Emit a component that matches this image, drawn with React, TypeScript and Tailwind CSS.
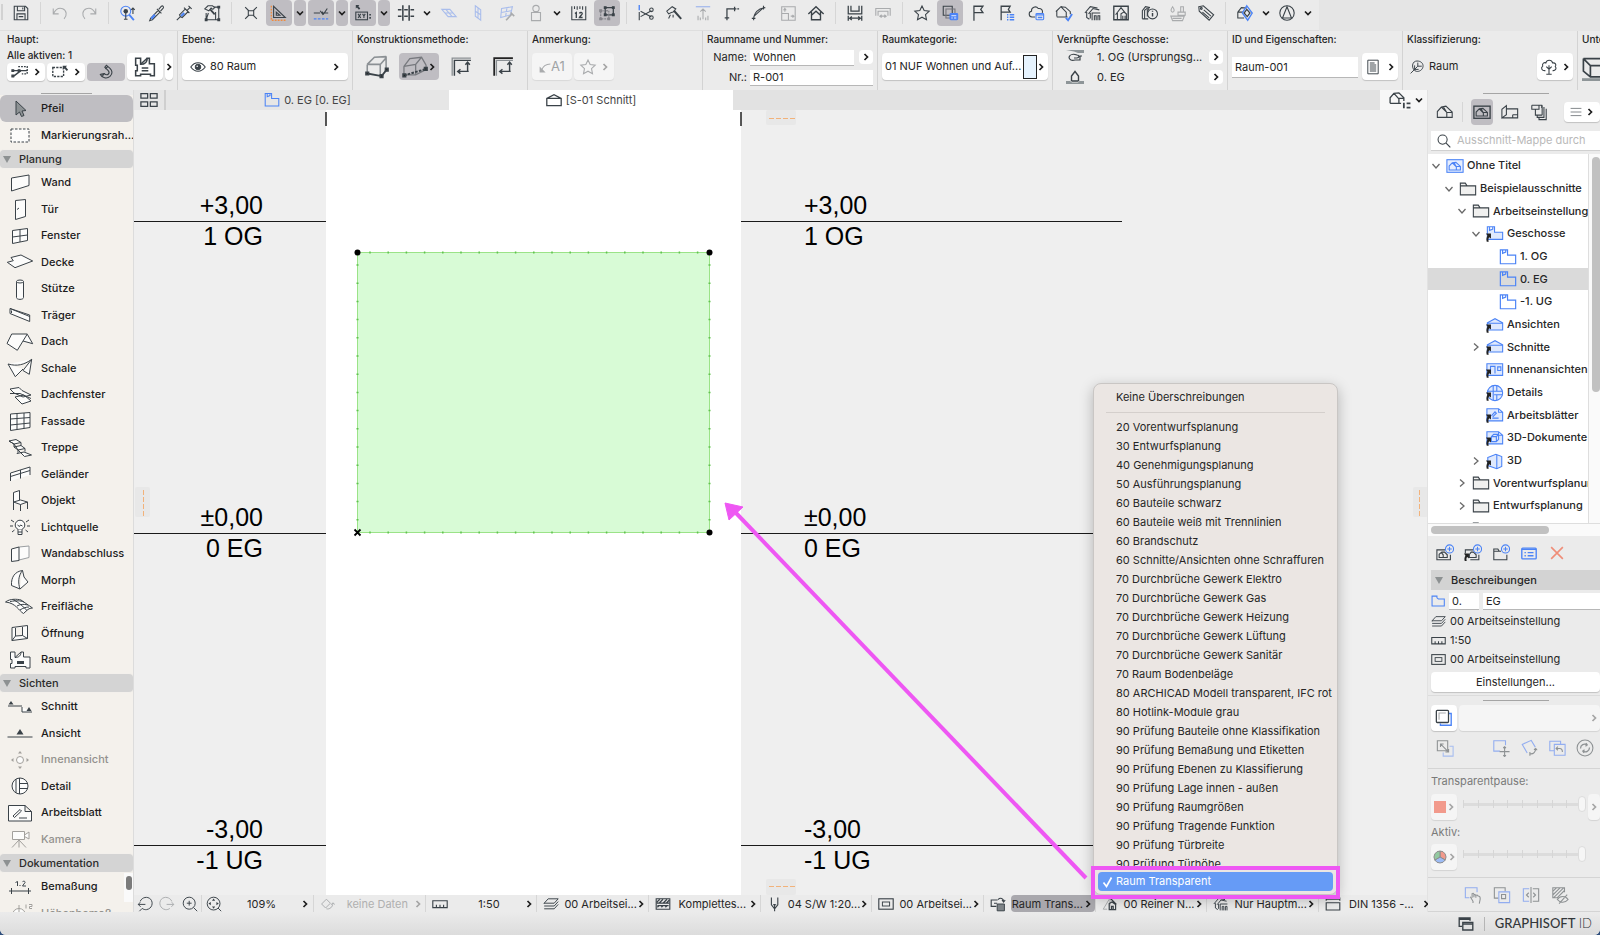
import type { ReactNode } from "react";

const INK = "#3a4248";
const BLUE = "#4b83f6";
const GREY = "#a9abad";

// 20x20 icons for toolbars and panels
const icons: Record<string, ReactNode> = {
  save: (
    <>
      <path d="M2.500 2.500h12.500l2.500 2.500v12.500h-15z" />
      <path d="M6 2.500v5h8v-5M12 4v2M5.500 17.500v-6.500h9v6.500M7.500 14h5" />
    </>
  ),
  undo: <path stroke={GREY} d="M2.500 5v6H8.500M2.700 10.800C5 6 9 3.800 13 5.200c4.500 1.800 5.200 7.500 1.500 11.300" />,
  redo: <path stroke={GREY} d="M17.500 5v6H11.500M17.300 10.800C15 6 11 3.800 7 5.200c-4.500 1.800-5.200 7.500-1.500 11.300" />,
  find: (
    <>
      <circle cx="7.500" cy="8" r="5.500" stroke={BLUE} />
      <path stroke={BLUE} d="M11.500 12l5 6" strokeWidth="2" />
      <circle cx="7.500" cy="8" r="2.500" fill={INK} stroke="none" />
      <path d="M7.500 8v9.500M15.500 11V4.500M13.500 6.500l2-2 2 2M5.500 17h4" />
    </>
  ),
  dropper: (
    <>
      <path d="M4 16l8.500-9 2 2L6 17.500l-3 1zM11 5.500l5 5M13 6l3-3.500c1.500-1 3 .5 2 2L15 8" />
      <path stroke={BLUE} strokeWidth="2.600" d="M4.800 16.200l4-4.200" />
    </>
  ),
  syringe: (
    <>
      <path d="M2 18l4-4M6 14l-1-2 6.500-6.500 3 3L8 15zM10 4l6 6M13.500 7L17 3.500M15 2l3.500 3.500" />
      <path stroke={BLUE} strokeWidth="2.400" d="M6.800 13.400l3.500-3.400" />
    </>
  ),
  hatchEdit: (
    <>
      <path d="M12 3.500h5.500v14H3.500V10M14 17.500V9M3.500 17.500L6 10" />
      <path d="M2 5.500L5.500 2h5l2.500 2-2 2-2-1.500-2.500 3z" />
      <path d="M8 6l5 5.500" strokeWidth="2" />
      <path fill={INK} d="M2.500 16.500h2v2h-2zM16.500 16.500h2v2h-2zM16.500 2.500h2v2h-2z" />
    </>
  ),
  nodeX: <path d="M3.500 3.500l4 4M16.500 3.500l-4 4M3.500 16.500l4-4M16.500 16.500l-4-4M7 7.500h6v5H7z" />,
  triangle: (
    <>
      <path d="M4 2.500V15h13zM7 9v3.500h4z" />
      <path stroke="#f08b3e" strokeDasharray="2 1.300" d="M1.500 2v16H18" strokeWidth="1.500" />
    </>
  ),
  guide: (
    <>
      <path d="M2 10h7M12 10h6M11 8.500l2 2.500 4-6M9 7.500L12.500 12" />
      <path stroke={BLUE} strokeDasharray="3 1.500" d="M2 16.500h16" strokeWidth="1.500" />
    </>
  ),
  xy: (
    <>
      <rect x="2" y="9" width="13" height="8.500" />
      <path d="M4.500 11l3 4.500M7.500 11l-3 4.500M9.500 11l1.500 2.200V15.500M12.500 11L11 13.200" />
      <path fill={INK} stroke="none" d="M2 1h4L4.800 2.500 7 5 5.500 6.300 3.300 4 2 5zM17 11h1.800v1.800H17zM17 14.500h1.800v1.800H17z" />
    </>
  ),
  grid: <path strokeWidth="1.700" d="M6.500 1.500v17M13.500 1.500v17M1 6.500h4M8 6.500h4M15 6.500h4M1 13.500h4M8 13.500h4M15 13.500h4" />,
  planeFlat: <path stroke="#a9bdec" d="M2 6h9l7 8H9zM5.500 10h9M6.500 6l7 8" />,
  planeUp: <path stroke="#a9bdec" d="M7 2l6 4.500V18l-6-4.500zM10 4.300v11.500M7 8l6 4" />,
  planeEdit: (
    <>
      <path stroke="#a9bdec" d="M4 5l12-2-2 9-11 3zM10 4l-1.500 9.500M3.500 9.500l11-2" />
      <path stroke={GREY} strokeWidth="1.800" d="M9 18l6-6.500M14 9.500l4 4" />
    </>
  ),
  weight: (
    <>
      <path stroke={GREY} d="M5 9.500h10V18.500H5zM8 9.500V8M12 9.500V8" />
      <circle cx="10" cy="5" r="3.500" stroke={GREY} />
    </>
  ),
  ruler12: (
    <>
      <path d="M2 2.500v4M5 2.500v3M8 2.500v4M11 2.500v3M14 2.500v4M17.500 2.500v4M2 2.500V17.500h15.500V2.500" />
      <path strokeWidth="1.500" d="M5.500 10.500l1.500-1v6M10.500 10.500c.5-1.500 3.500-1.500 3 .5-.3 1-2 2-3 4h3.500" />
    </>
  ),
  group: (
    <>
      <path d="M8 4h9v8H8z" strokeWidth="1.400" />
      <path stroke="#85858b" strokeDasharray="2 1" d="M3 7.500h9v9H3z" strokeWidth="1.400" />
      <path fill={INK} d="M7 3h2v2H7zM16 3h2v2h-2zM7 11h2v2H7zM16 11h2v2h-2z" />
      <path fill="#85858b" stroke="#85858b" d="M2 6.500h2v2H2zM2 15.500h2v2H2zM11 15.500h2v2h-2z" />
    </>
  ),
  scissors: (
    <>
      <path stroke={BLUE} d="M2.500 1v6" strokeWidth="1.500" />
      <path d="M2.500 9v9M4 8l12 6.500M4 14l12-6.500" />
      <circle cx="16" cy="6.500" r="2" />
      <circle cx="16" cy="15" r="2" />
    </>
  ),
  hammer: (
    <>
      <path d="M2 8L8 3l4 2.500-3 3.500-2 .5L4 11z" />
      <path strokeWidth="2.200" d="M10 7.500l8 9" />
      <path d="M6 12l-2 4M9 12v3" />
    </>
  ),
  adjust: (
    <>
      <path stroke="#a9bdec" strokeWidth="1.500" d="M2 3h16" />
      <path stroke={GREY} d="M10 17V6M7 8.500L10 5.500l3 3M4.500 13v5M7 15v3M13 15v3M15.500 13v5" />
    </>
  ),
  corner: <path strokeWidth="1.400" d="M5.500 18V5.500H16M3 15.500h5M14 3v5M17 5.500h2" />,
  curve: <path d="M4 18C4 10 9 4.500 17 4M2 16h4M15 2v4M4 14L15 4" />,
  stretch: <path stroke={GREY} d="M3 3h15v15H3zM3 10.500h7.500V18M6.500 8.500v-3M5 7l1.500-2L8 7M13 13.500h3.500M15 12l1.500 1.500L15 15" />,
  house: <path strokeWidth="1.500" d="M1.500 11L10 3l8.500 8M5 8.500V17.500h10V8.500M5 12.500l5-4.500 5 4.500" />,
  dimLow: <path strokeWidth="1.400" d="M2.500 2v9h15V2M5.500 2v6h9V2M2.500 13v5.500M17.500 13v5.500M4 15.800h12M6.500 13.800l-2.500 2 2.500 2M13.500 13.800l2.500 2-2.500 2" />,
  dimHigh: <path stroke={GREY} d="M2 13V5h16v8M4.500 13V8h11v5M6.500 13.500h7M8.500 12l-2 1.500 2 1.500M11.500 12l2 1.500-2 1.500" />,
  star: <path d="M10 2.200l2.400 5.100 5.600.7-4.100 3.800 1.100 5.600L10 14.700l-5 2.700 1.100-5.600L2 8l5.600-.7z" />,
  starGrey: <path stroke={GREY} d="M10 2.200l2.400 5.100 5.600.7-4.100 3.800 1.100 5.600L10 14.700l-5 2.700 1.100-5.600L2 8l5.600-.7z" />,
  layersBlue: (
    <>
      <path d="M2.500 2.500h10v10h-10z" />
      <path stroke="#77777c" d="M5.500 5.500h10v10h-10z" />
      <rect x="10" y="10.500" width="8.500" height="7" rx="1" fill={BLUE} stroke={BLUE} />
      <path stroke="#e8efff" d="M11.500 13h5.500M11.500 15.500h1.500M14.500 15.500h2.500" />
    </>
  ),
  flag: <path strokeWidth="1.400" d="M5.500 18.500V2.500h10L13 6l2.500 3.500h-10" />,
  flagList: (
    <>
      <path strokeWidth="1.400" d="M3.500 18V2.500h10L11.500 6l2 3h-10" />
      <path stroke={BLUE} strokeWidth="1.600" d="M10 12h1.500M13 12h5M10 14.800h1.500M13 14.800h5M10 17.600h1.500M13 17.600h5" />
    </>
  ),
  cloud: (
    <>
      <path d="M9 14.500H5.500c-4-.5-4-6-.5-6.500C4.500 3.500 10 1.500 12.500 5c3.500-.5 5.500 2 4.500 5" />
      <rect x="10" y="10.500" width="8.500" height="7" rx="1" stroke={BLUE} />
      <path stroke={BLUE} strokeWidth="1.500" d="M10 12h8.500M12 15h5" />
    </>
  ),
  houseCheck: (
    <>
      <path d="M2 14V7.500L6.500 3l5 .5 5.500 5v3M2 7.500L1 8.500M6.500 3l6 6v5.500H2M12 14.500h2" />
      <path stroke={BLUE} strokeWidth="2" d="M12 15.500l2.500 2.500L19 11" />
    </>
  ),
  houseTrain: <path d="M1 10L7 3l8 1.500M3 9v6l3 2M5 11l5-6 7 1.500M7 10v6M9 18v-8h9M11.500 18v-5h2v5M15.500 18v-5h2v5" />,
  houseFrame: (
    <>
      <path strokeWidth="1.500" d="M2 2.500h16v15H2z" />
      <path d="M4 12l6-8 6.500 8M6 10v7.500M10 17V11l3-2 3 2v6M12 13v4M14.500 13v4" />
    </>
  ),
  housesInfo: (
    <>
      <path d="M1.500 16.500v-9L5 3l5 1M4 17V7l4-3M1.500 16.500H8M7 14V7l2-2" />
      <circle cx="12.800" cy="11" r="5.500" />
      <path strokeWidth="1.600" d="M12.800 10v4M12.800 7.500v1" />
    </>
  ),
  paint: <path stroke={GREY} d="M4 3c-3 4-1.500 6 0 6s3-2 0-6zM10 9h8v3.500h-8zM13 9V3h3v6M2 13.500h15l-2 5H4zM4 16h10" />,
  tag: (
    <>
      <path d="M2 3l5-1 11.500 10-5 6L2.500 8zM7.500 6.500l8 7M6 9l7.500 6.500" />
      <circle cx="4.800" cy="5" r="1" />
    </>
  ),
  cubeBlue: (
    <>
      <path d="M2 9l4-5 6 .5M2 9v6.500h7M2 9h6" />
      <path stroke={BLUE} strokeWidth="1.500" d="M12 2l6 8-5 8-6-8z" />
      <path strokeWidth="1.400" d="M12 6l3.500 4-3 4L9 10z" />
    </>
  ),
  north: (
    <>
      <circle cx="10" cy="10" r="8" />
      <path d="M10 3L5 15.500h10z" />
    </>
  ),
  marqueeArrow: (
    <>
      <path strokeDasharray="2 1.200" d="M8 4h10v8h-6" strokeWidth="1.500" />
      <path strokeWidth="1.600" d="M2 8.500h16M3 14.500l8-6" />
      <path fill={INK} d="M1 7.500h2v2H1zM1 13.500h2v2H1zM8 7.500h2v2H8z" />
    </>
  ),
  marquee: (
    <>
      <path strokeDasharray="2.500 1.300" d="M2 5h12v10H2z" strokeWidth="1.500" />
      <path fill={INK} stroke="none" d="M13 3h5l-1.500 1.500 2.500 3-1.500 1.500-2.500-3L13 7.500z" />
    </>
  ),
  magnet: <path strokeWidth="1.400" d="M3 13c2 4.500 8 6 12 2.500 4-4 2.500-7.500 0-10L10.500 1.500 8.500 4l4 4c2 2 1.500 3.500.5 4.500s-3 1.500-5-.5zM3 13l5-1M9 6l3-2.500M5.500 15l2.500-3" />,
  room: (
    <>
      <path strokeWidth="1.400" d="M1.500 2H6v5.500c3.500 0 6-2 6-5.500h2v5h4.500v11h-3.500v-1.500H6V18H1.500v-4.500H3v-5H1.500z" />
      <path strokeWidth="1.400" d="M7 11h6M7 13.500h6M6 7.500L12 2" />
    </>
  ),
  eye: (
    <>
      <path strokeWidth="1.400" d="M1 10c5-7 13-7 18 0-5 7-13 7-18 0z" />
      <circle cx="10" cy="10" r="3.500" fill={INK} />
      <circle cx="9" cy="9" r="1" fill="#fff" stroke="none" />
    </>
  ),
  call: (
    <>
      <path stroke={GREY} strokeWidth="1.800" d="M4 16C6 10 11 5 19 5" />
      <path fill={GREY} stroke="none" d="M1 9v10h10z" />
    </>
  ),
  hands: (
    <>
      <path fill="#8e9598" stroke="none" d="M1 3h18v3H13l-4-1.500z" />
      <path d="M4 10c1-3 5-3 8-2 3 .5 2 3 0 3H9M4 10c0 3 3 4 6 3h5V9h2M9 11h3" />
    </>
  ),
  houseGround: (
    <>
      <path fill="#8e9598" stroke="none" d="M1 14h4l2 1.500h6l1.500-1.500H19v3H1z" />
      <path strokeWidth="1.400" d="M6.500 14V9L10 4.500 13.500 9v5M6.500 14h7" />
    </>
  ),
  doc: <path d="M3.500 1.500h13v17h-13zM6 5h6M6 7.500h8M6 10h8M6 12.500h8M6 15h8" />,
  classify: (
    <>
      <path d="M2 18l9-9M11 4.500V9h5M7 8v5h5" />
      <path d="M10 2.500c5 0 8 3 7.500 7S13 16 9.500 15.500 4 11 4.500 7.500 7.500 2.500 10 2.500z" />
    </>
  ),
  tree: <path d="M10 18V8M7 9.500l3 3 3-3M7 18h6M6 14c-4 .5-5.500-3-3-5-1-3 2-4.500 3.500-3.500C7.500 1.500 13 1.500 14 5.500c3-.5 4.500 2 3 4 2 2 0 5-3 4.500" />,
  views: (
    <>
      <path d="M1 13V8l3.500-4 4.500-.5L13.500 8v3M4.500 4L9 9v4M9 8.500h4.500M1 13h10" />
      <path strokeWidth="1.600" d="M13.500 12.500v5M16 13h3.500M16 17h3.500" />
    </>
  ),
  houseOnly: <path d="M1.500 16V9.500L6 4.500l5-1 7 6.500v6zM6 4.500l6 6V16M12 10.500l-4-6.500M12 10.500h6" />,
  navView: (
    <>
      <rect x="1" y="3.500" width="18" height="13.500" strokeWidth="1.500" />
      <path d="M3.500 14.500V10L7 6.500l4-.5 5 4.500v4zM7 6.500l4.500 4.500v3.500M11.500 11l-3-5M11.500 10.500H16" />
    </>
  ),
  navBlue: (
    <g stroke={BLUE}>
      <rect x="1" y="3" width="18" height="14" fill="#e6eefe" />
      <path d="M3.500 14.500V10L7 6.500l4-.5 5 4.500v4zM7 6.500l4.500 4.500v3.500M11.500 11l-3-5M11.500 10.500H16" />
    </g>
  ),
  layout: <path d="M1 16.500L6 13V3L1 7zM6 6.500h12.500v10H1M13 13h5.500M13 13v3.500" />,
  books: <path d="M2 2.500h11v3M2 2.500v4.500h8V2.500M6 7v6.500h7.500M13.500 2.500v11M15.500 4.500v11.500H8V14M18 6.500v12h-8V16" />,
  list: <path stroke="#555b60" d="M1 4h18M1 10h18M1 16h18" />,
  folder: (
    <path fill="#f0f0ef" d="M1.500 16.500v-13h5.500l2 3h9.500v10zM1.500 6.500H9" />
  ),
  story: <path stroke={BLUE} strokeWidth="1.300" d="M1.500 2h8v6H18.500v9.500h-17zM4 2v4l3.500-1.500V2" />,
  storyPlain: <path stroke={BLUE} strokeWidth="1.500" d="M1.500 3h7v2.500l2 1.500h8.500v10h-17.500z" />,
  storyLink: (
    <>
      <path fill="#dfe9fd" stroke={BLUE} d="M1.500 2h8v6H18.500v8h-17zM4 2v4l3.500-1.500V2" />
      <path fill="#222" stroke="none" d="M0 9.500h5.500v5.500l-2-1.500c-1 1.500-1 3-.5 5H.8c-.8-3 0-5 .8-6.500z" />
    </>
  ),
  section: (
    <>
      <path fill="#dfe9fd" stroke={BLUE} d="M1.500 15.500V7.500L10 3l8.500 4.500v8zM1.500 8h17" />
      <path fill="#222" stroke="none" d="M0 9.500h5.500v5.500l-2-1.500c-1 1.500-1 3-.5 5H.8c-.8-3 0-5 .8-6.500z" />
    </>
  ),
  interior: (
    <>
      <path fill="#dfe9fd" stroke={BLUE} d="M1 3h17.500v13H1zM5 14V6h5v8M13 6.500h3.500v4H13z" />
      <path fill="#222" stroke="none" d="M0 9.500h5.500v5.500l-2-1.500c-1 1.500-1 3-.5 5H.8c-.8-3 0-5 .8-6.500z" />
    </>
  ),
  detail: (
    <>
      <circle cx="10" cy="10" r="8.500" fill="#dfe9fd" stroke={BLUE} />
      <path stroke={BLUE} d="M8 2v16M12 2v6.500M12 12v6M1.500 8H18M9 12h9.500" />
      <path fill="#222" stroke="none" d="M0 9.500h5.500v5.500l-2-1.500c-1 1.500-1 3-.5 5H.8c-.8-3 0-5 .8-6.500z" />
    </>
  ),
  worksheet: (
    <>
      <path fill="#dfe9fd" stroke={BLUE} d="M1 3h13l4.500 4v9.500H1zM14 3v4h4.500M6 11l4-4.500 1.500 1.500-4 4M7 13.500h7" />
      <path fill="#222" stroke="none" d="M0 9.500h5.500v5.500l-2-1.500c-1 1.500-1 3-.5 5H.8c-.8-3 0-5 .8-6.500z" />
    </>
  ),
  doc3d: (
    <>
      <path fill="#dfe9fd" stroke={BLUE} d="M1 3h13l4.500 4v9.500H1zM14 3v4h4.500M6 8.500L8.500 6H14v5.500L11.500 14H6zM6 8.500h5.500V14M11.500 8.500L14 6" />
      <path fill="#222" stroke="none" d="M0 9.500h5.500v5.500l-2-1.500c-1 1.500-1 3-.5 5H.8c-.8-3 0-5 .8-6.500z" />
    </>
  ),
  box3d: (
    <>
      <path fill="#dfe9fd" stroke={BLUE} d="M2 6l9-3.500L17.500 5v11L12 18.500 2 15zM12 2.800v15.500" />
      <path fill="#222" stroke="none" d="M0 9.500h5.500v5.500l-2-1.500c-1 1.500-1 3-.5 5H.8c-.8-3 0-5 .8-6.500z" />
    </>
  ),
  addView: (
    <>
      <path d="M10 6.500H1v11h15V12M3.500 15v-3.500l3-2.500 3 0 3 3v3zM8 15v-3l-2-2.500" />
      <circle cx="15" cy="5.500" r="4.500" fill="#ebebeb" stroke={BLUE} />
      <path stroke={BLUE} d="M15 3v5M12.500 5.500h5" />
    </>
  ),
  addLink: (
    <>
      <path d="M10 6.500H1.500v4M16.500 12v5.500H7M6 15v-3.500l2-2.500 2.500 0 3 3v3z" />
      <path fill="#222" stroke="none" d="M0 10.500h5.500v5.500l-2-1.500c-1 1-1 2.500-.5 4.500H.8c-.8-3 0-4.500.8-6z" />
      <circle cx="15" cy="5.500" r="4.500" fill="#ebebeb" stroke={BLUE} />
      <path stroke={BLUE} d="M15 3v5M12.500 5.500h5" />
    </>
  ),
  addFolder: (
    <>
      <path d="M10 8H8L6.500 5.500H2v12h14.500V12M2 8h6" />
      <circle cx="15" cy="5.500" r="4.500" fill="#ebebeb" stroke={BLUE} />
      <path stroke={BLUE} d="M15 3v5M12.500 5.500h5" />
    </>
  ),
  listBlue: (
    <>
      <rect x="2" y="4.500" width="16" height="12" rx="1" stroke={BLUE} strokeWidth="1.500" />
      <path stroke={BLUE} strokeWidth="1.500" d="M2 6h16M5 9.500h1.500M8.500 9.500H15M5 13h1.500M8.500 13H15" />
    </>
  ),
  cross: <path stroke="#ef8d78" strokeWidth="1.800" d="M3.500 3.500l13 13M16.500 3.500l-13 13" />,
  layers: <path d="M1.500 9L6.500 3.500h12.500L14 9zM1.500 12.500h12.500l5-5.500M1.500 16h12.500l5-5.500M1.500 9v1M14 12.500" />,
  scale: <path strokeWidth="1.400" d="M1 6h18v8.500H1zM5.500 14v-3M10 14v-3M14.500 14v-3" />,
  frame: (
    <>
      <rect x="1" y="3.500" width="18" height="13" strokeWidth="1.400" />
      <rect x="5.500" y="7.500" width="9" height="5" />
    </>
  ),
  trace: (
    <>
      <path stroke={BLUE} d="M15 5h3v13H6v-2" strokeWidth="1.500" />
      <rect x="1.500" y="1.500" width="13.500" height="13.500" rx="1" strokeWidth="1.400" />
      <path stroke={GREY} d="M4.500 12V4.500H12" />
    </>
  ),
  swap: (
    <>
      <path stroke="#a7bdf0" d="M15 8h4v11H8v-4" />
      <path stroke="#8e9294" d="M1.500 2h11.500v11H1.500zM5 5.500l9 9M5 9V5.500h3.500M14 11v3.500h-3.500" />
    </>
  ),
  traceMove: (
    <>
      <path stroke="#92adf0" d="M9 13.500H2V2h13v5" />
      <path stroke="#8e9294" d="M14 8.500v11M8.500 14h11M12.500 10l1.500-1.500 1.500 1.500M12.500 18l1.500 1.500 1.500-1.500" />
    </>
  ),
  traceRotate: (
    <>
      <path stroke="#92adf0" d="M8 15.500L2.500 6l10-4.500L17 9" />
      <path stroke="#8e9294" d="M11 16.500c4 .5 6-2 6.500-5.500M11 14.500v4M15.500 12l2-1.500 1.500 2" />
    </>
  ),
  traceBack: (
    <>
      <path stroke="#92adf0" d="M7 13H2V2.500h12v3M7 6h12v12H7z" />
      <path stroke="#8e9294" d="M9 10.500h4c2.500 0 3 2 3 4M11 8.500l-2 2 2 2" />
    </>
  ),
  refresh: (
    <>
      <circle cx="10" cy="10" r="8.800" stroke="#8e9294" />
      <path stroke="#8e9294" strokeWidth="1.400" d="M5 10.500c0-4 4-6 7.500-4M15 9.500c0 4-4 6-7.500 4M11 4.500l1.500 2-2 1.500M9 15.500l-1.500-2 2-1.500" />
    </>
  ),
  hand: (
    <>
      <path stroke="#92adf0" d="M6 13H1.500V2h13v5" />
      <path stroke="#8e9294" d="M7 12l3 5v2M9 13V8.500c1.500-1 2 0 2 1v3M11 10c1-1 2 0 2.200 1v2M13.500 10.500c1-1 2 0 2.200 1M16 11.500c1.500-.5 2 1 2 3l-1 5" />
    </>
  ),
  overlap: (
    <>
      <path stroke="#8e9294" d="M6 13.500H1.500V2h12v4" />
      <path stroke="#92adf0" d="M6.500 6.500h12v12h-12z" />
      <path stroke="#8e9294" d="M9.500 9.500h4.500v4.500H9.500z" />
    </>
  ),
  splitView: (
    <>
      <path stroke="#92adf0" d="M8 3H1.500v14H8" />
      <path stroke="#8e9294" d="M12 3h6.500v14H12M10 1v18M7.500 7.500L5 10l2.500 2.500M12.500 7.500L15 10l-2.500 2.500" />
    </>
  ),
  hatchHide: (
    <>
      <path stroke="#8e9294" d="M8 13H2V2h13v5M2 6l4-4M2 10l8-8M3 13L14 2M7 13l8-8" />
      <path stroke="#8e9294" d="M7 15c3-4.500 9-4.500 12 0-3 4-9 4-12 0zM9 19.500l9-10" />
    </>
  ),
  zoomPrev: <path d="M1.500 10.500h9M4.500 7.500l-3 3 3 3M4 6.500c2.500-5 9-6.500 13-2.500 4 4.500 1.500 12-5 13-2 .2-4-.2-5.500-1.500M6.500 15.500L3 19" />,
  zoomNext: <path stroke={GREY} d="M18.500 10.500h-9M15.500 7.500l3 3-3 3M16 6.500C13.500 1.500 7 0 3 4c-4 4.500-1.500 12 5 13 2 .2 4-.2 5.500-1.500" />,
  zoomIn: (
    <>
      <circle cx="9" cy="9" r="7.500" />
      <path d="M9 6v6M6 9h6M14.500 14.500L19 19" />
    </>
  ),
  fit: (
    <>
      <circle cx="9.500" cy="9.500" r="8" />
      <path d="M15 15l4 4" />
      <path fill={INK} stroke="none" d="M9.500 3l2 3h-4zM9.500 16l2-3h-4zM3 9.500l3-2v4zM16 9.500l-3-2v4z" />
    </>
  ),
  orient: <path stroke={GREY} d="M2 10l6-6 5 5-6 6zM8 16c4 1 8-2 8-7M14 11l2-2.500 2.500 2" />,
  combine: (
    <>
      <path strokeWidth="1.400" d="M1.500 3.500h17v13h-17z" />
      <path strokeWidth="1.600" d="M2 8l4-4M5 9l5-5M10 9l5-5M14 9l4-4M2 9h16M3 14l2-2M8 14l2-2M13 14l2-2M3 12h14" />
    </>
  ),
  pen: <path strokeWidth="1.400" d="M5.500 2v9l4 5 4-5V2M9.500 10v9M7.500 11h4" />,
  override: (
    <>
      <path d="M8 13H1.500V5h8M5 9h4M10 4.500c3-3 7-1.500 7 2.500M15 5l2 2.500 2-2.500" strokeWidth="1.400" />
      <path fill="#7e8488" d="M9 10h9v8.500H9z" />
    </>
  ),
  reno: (
    <>
      <path stroke={GREY} d="M1.500 16.500h5M1.500 16.500L10 2.500v14" />
      <path strokeWidth="1.500" d="M10 2.500l8 8M9 17V9.500l3.500-2L17 10.500V17zM12 17v-4h2v4" />
    </>
  ),
  dims: <path strokeWidth="1.400" d="M1.500 8.500h17v9h-17zM1.500 2v4M18.500 2v4M1.500 4h17" />,
  sectionTab: <path strokeWidth="1.600" d="M1 17V8L10 3.500 19 8v9zM1 8h18" />,
  tabs: <path strokeWidth="1.400" d="M1 3h7.500v5H1zM11.500 3H19v5h-7.500zM1 12h7.500v5H1zM11.500 12H19v5h-7.500z" />,
  methodA: (
    <>
      <path stroke="#8b9094" d="M2.500 8L8 2.500l9-.5M2.500 8h10L17 3v9M12.500 8v8M2.500 8v6.500" />
      <path strokeWidth="1.400" d="M2.500 15l11 2 4-5" />
      <path fill="#222" d="M1.500 14h2v2h-2zM12.500 16h2v2h-2zM16.500 11h2v2h-2z" />
    </>
  ),
  methodB: (
    <>
      <path stroke="#77797e" strokeWidth="1" d="M1.500 9.500L6 3.500l9-1 3.500 6M1.500 9.500l9-1.500L15 2.500M10.500 8v8M1.500 9.500v6.500h9l8-4V8.500" />
      <path strokeWidth="1.500" strokeDasharray="2 1" d="M1.500 16.500l17-5" />
      <path fill="#222" d="M.8 15.500h2v2h-2zM17.300 10.500h2v2h-2z" />
    </>
  ),
  methodC: (
    <>
      <path stroke="#8b9094" d="M2 18V2h17" />
      <path d="M4 18V4h15M16 6v8M14 8l2-2.500L18 8M17 14H7M9.500 12L7 14l2.500 2" strokeWidth="1.300" />
    </>
  ),
  methodD: (
    <>
      <path stroke="#222" strokeWidth="1.600" d="M2 18V2h17" />
      <path d="M4 18V4h15" stroke="#8b9094" />
      <path d="M16 6v8M14 8l2-2.500L18 8M17 14H7M9.500 12L7 14l2.500 2" strokeWidth="1.300" />
    </>
  ),
  windows: <path strokeWidth="1.700" d="M5 13H1.500V2.500H15V6M1.500 4H15M6 8h12.500v9.500H6zM6 10h12.500" />,
  zoneCut: (
    <>
      <path d="M1 4h14M1 4v9l5 4h13M1 4l5 5v8M6 9h13" />
      <path fill="#8e9598" stroke="none" d="M0 18h20v2H0z" />
    </>
  ),
  search: (
    <>
      <circle cx="8" cy="8" r="6.500" strokeWidth="1.500" />
      <path strokeWidth="1.700" d="M13 13L19 19" />
    </>
  ),
};

// 30x24 icons for the tool palette
const toolIcons: Record<string, ReactNode> = {
  Pfeil: <path fill="#8d9294" d="M11 4v14l3.500-3 2 4.500 2.500-1-2-4.500 4-.5z" />,
  "Markierungsrah...": <path strokeDasharray="2.500 1.500" d="M6 6h18v13H6z" />,
  Wand: <path d="M6.500 7L24 4v10.500L6.500 20z" />,
  Tür: <path d="M10.500 3.500l10-1v17l-10 3zM12 12.500l2-1.500" />,
  Fenster: <path d="M7.500 6.500l15-2v12l-15 3zM15 5.500V18M7.500 13l15-2" />,
  Decke: <path d="M2.300 12.300l6-1.600L6 7.500 16 5l11.700 6L10 17.700z" />,
  Stütze: (
    <>
      <path d="M11.500 4.500v16c0 2.500 7 2.500 7 0v-16" />
      <ellipse cx="15" cy="4.500" rx="3.500" ry="1.500" />
    </>
  ),
  Träger: <path d="M5 5.500L24.700 12v6.500L5 10.500zM6.500 7.500v2.500M5 5.500l19.700 8" />,
  Dach: <path d="M6.700 4h15.600l-10 16.300L2 13.500zM22.300 4.300L27.700 13.700 18 11" />,
  Schale: <path d="M3 8c9 2.500 16 1 23.700-4.700l-2.400 15L18 14.500 26.700 3.300M3 8l7.300 12.700L18 13" />,
  Dachfenster: <path d="M5 6l9-1.500 3 3L26 12l-8 2L9 10zM5 10.500h10l11 5M10 14l9-2 7 6-9 3z" />,
  Fassade: <path d="M5.500 5L25 3.500v15L5.500 21.500zM12 4.500v16M19 4v15.500M5.500 10L25 8.500M5.500 16L25 14" />,
  Treppe: <path d="M4 5l7-1.500 5 3-7 1.500zM9 8v3l7-1.500 4 3-7 1.500zM16 6.500v3M13 14v2.500l-1 1 7-1.500 7.500 3-7 1.500zM20 12.500v3M4 5l5 3M9 11l4 3" />,
  Geländer: <path d="M5.500 19v-8L25 5v8M15.500 8v8.500M5.500 14.500L25 8.500" />,
  Objekt: <path d="M8.500 16V3.500l6-2v9.500M8.500 13l7-2 7 2-7 2.500zM8.500 13v8M15.500 15.500V22M22.500 13v7" />,
  Lichtquelle: (
    <>
      <circle cx="15" cy="10" r="4.800" />
      <path d="M13 14.500v5h4v-5M13 17h4M12.500 10l2 1.500 1-1.500 2 1M6 5l3 2M24 5l-3 2M5 11h3M22 11h3M7 17l2.500-2M23 17l-2.500-2" />
    </>
  ),
  Wandabschluss: (
    <>
      <path stroke="#9a9ea1" d="M14 5l10-1v11.500L14 18" />
      <path d="M6.500 7l7.500-2v13.500l-7.500 1z" />
    </>
  ),
  Morph: <path d="M6.500 17.500C6 9 10 3.500 17.500 2.500L19 9l4 5-8 7zM17.500 2.500C13 8 13 15 15 21" />,
  Freifläche: <path d="M.5 7C5 3.500 12 4 16 5l11.500 8c-4 0-5 2-9 5.500C14 16 11 8 .5 7zM8 4.500c6 3 10 7 14 11M5 6.500c7-1 10-1 14 .5M12 11c4-2 6-2 11-1M15 15c3-2 6-3 9-3" />,
  Öffnung: <path d="M7 6.500l15.500-2v13L7 19.500zM10.500 7v8l7-.5V6M17.500 14.500l5 3M7 19.500l3.500-4.500" />,
  Raum: (
    <>
      <path d="M5.500 4H10v5.500c4 0 6-2 6-5.500h2.500v5H25v11h-4v-1.500H10V20H5.500v-4.500H7v-4H5.500zM10 9.500L16 4" />
      <path fill={INK} stroke="none" d="M12 13h7v3h-7z" />
    </>
  ),
  Schnitt: (
    <>
      <path d="M3 11h14M17 12v5h10" />
      <path fill={INK} stroke="none" d="M3.500 9.500h5L6 6zM21.500 16h5L24 12z" />
    </>
  ),
  Ansicht: (
    <>
      <path d="M2.500 16h25" />
      <path fill={INK} stroke="none" d="M11.500 13.500h7L15 8z" />
    </>
  ),
  Innenansicht: (
    <>
      <circle cx="15" cy="12" r="3.500" />
      <path fill="#a2a09c" stroke="none" d="M13 5.500h4L15 3zM13 18.500h4L15 21zM8.500 10v4L6 12zM21.500 10v4l2.500-2z" />
    </>
  ),
  Detail: (
    <>
      <circle cx="15" cy="12" r="8" />
      <path d="M11 5v14M14.500 4v16M14.500 9.500H23M14.500 14.500H23" />
    </>
  ),
  Arbeitsblatt: <path d="M3.500 4.500H20l6.500 6V20h-23zM20 4.500v6h6.500M8 15l7-6.500 1.500 1.500-7 6.500zM14 17h8" />,
  Kamera: <path d="M7.500 4.500h12v8h-12zM19.500 8L24 5v7l-4.500-2.500M14 12.500v8M14 13l-7 7.500M14 13l7 7.500" />,
  Bemaßung: (
    <>
      <path d="M4 16h22M6.500 13v6M23.500 13v6" />
      <path d="M10.500 7.500l2-1v4.500M17.500 7c.5-1.200 3-1 2.500.5L17.500 11H21M14.500 10.500h1" />
    </>
  ),
  Höhenbemaß: (
    <>
      <circle cx="14" cy="14" r="6.500" />
      <path d="M14 4v16M5 14h18M21 3.500v4M24 3.500h3v2h-2.500v2H27" />
    </>
  ),
};

type IconProps = { name: string; className?: string };

function Icon({ name, className = "size-[18px]" }: IconProps) {
  return (
    <svg viewBox="0 0 20 20" fill="none" stroke={INK} strokeWidth="1.200" className={`shrink-0 ${className}`} aria-hidden="true">
      {icons[name]}
    </svg>
  );
}

function Chevron({ muted = false, down = false }: { muted?: boolean; down?: boolean }) {
  return (
    <svg
      viewBox="0 0 8 8"
      fill="none"
      stroke={muted ? "#a5a5a5" : "#1e1e1e"}
      strokeWidth="1.700"
      className={`size-2 shrink-0 ${down ? "rotate-90" : ""}`}
      aria-hidden="true"
    >
      <path d="M2.500 1L5.500 4 2.500 7" />
    </svg>
  );
}

type ToolbarItem = { kind: "icon" | "wide" | "pressed" | "chev" | "chevPressed" | "sep"; icon?: string; label?: string };

const toolbar: ToolbarItem[] = [
  { kind: "icon", icon: "save", label: "Sichern" },
  { kind: "sep" },
  { kind: "icon", icon: "undo", label: "Widerrufen" },
  { kind: "wide", icon: "redo", label: "Wiederholen" },
  { kind: "sep" },
  { kind: "icon", icon: "find", label: "Suchen" },
  { kind: "icon", icon: "dropper", label: "Parameter aufnehmen" },
  { kind: "icon", icon: "syringe", label: "Parameter übertragen" },
  { kind: "icon", icon: "hatchEdit", label: "Elemente ändern" },
  { kind: "sep" },
  { kind: "icon", icon: "nodeX", label: "Schnittpunkt" },
  { kind: "pressed", icon: "triangle", label: "Hilfslinien" },
  { kind: "chevPressed", label: "Hilfslinien-Optionen" },
  { kind: "pressed", icon: "guide", label: "Fangpunkte" },
  { kind: "chevPressed", label: "Fangpunkt-Optionen" },
  { kind: "pressed", icon: "xy", label: "Koordinaten" },
  { kind: "chevPressed", label: "Koordinaten-Optionen" },
  { kind: "wide", icon: "grid", label: "Raster" },
  { kind: "chev", label: "Raster-Optionen" },
  { kind: "wide", icon: "planeFlat", label: "Bearbeitungsebene" },
  { kind: "wide", icon: "planeUp", label: "Vertikale Ebene" },
  { kind: "wide", icon: "planeEdit", label: "Ebene wählen" },
  { kind: "wide", icon: "weight", label: "Schwerkraft" },
  { kind: "chev", label: "Schwerkraft-Optionen" },
  { kind: "wide", icon: "ruler12", label: "Maße" },
  { kind: "pressed", icon: "group", label: "Gruppieren" },
  { kind: "sep" },
  { kind: "icon", icon: "scissors", label: "Trennen" },
  { kind: "icon", icon: "hammer", label: "Anpassen" },
  { kind: "wide", icon: "adjust", label: "Verlängern" },
  { kind: "icon", icon: "corner", label: "Verschneiden" },
  { kind: "icon", icon: "curve", label: "Ausrunden" },
  { kind: "wide", icon: "stretch", label: "Größe ändern" },
  { kind: "icon", icon: "house", label: "Dach anpassen" },
  { kind: "sep" },
  { kind: "icon", icon: "dimLow", label: "Bemaßung unten" },
  { kind: "icon", icon: "dimHigh", label: "Bemaßung oben" },
  { kind: "sep" },
  { kind: "icon", icon: "star", label: "Favoriten" },
  { kind: "pressed", icon: "layersBlue", label: "Transparentpause" },
  { kind: "icon", icon: "flag", label: "Markierung" },
  { kind: "wide", icon: "flagList", label: "Markierungsliste" },
  { kind: "wide", icon: "cloud", label: "Änderungen" },
  { kind: "icon", icon: "houseCheck", label: "Modellprüfung" },
  { kind: "wide", icon: "houseTrain", label: "Modelle" },
  { kind: "icon", icon: "houseFrame", label: "Schnittansicht" },
  { kind: "wide", icon: "housesInfo", label: "Informationen" },
  { kind: "icon", icon: "paint", label: "Oberfläche" },
  { kind: "icon", icon: "tag", label: "Etikett" },
  { kind: "sep" },
  { kind: "icon", icon: "cubeBlue", label: "3D-Ebene" },
  { kind: "chev", label: "3D-Optionen" },
  { kind: "icon", icon: "north", label: "Nordrichtung" },
  { kind: "chev", label: "Nord-Optionen" },
];

const planungTools = [
  "Wand", "Tür", "Fenster", "Decke", "Stütze", "Träger", "Dach", "Schale", "Dachfenster", "Fassade",
  "Treppe", "Geländer", "Objekt", "Lichtquelle", "Wandabschluss", "Morph", "Freifläche", "Öffnung", "Raum",
];
const sichtenTools = ["Schnitt", "Ansicht", "Innenansicht", "Detail", "Arbeitsblatt", "Kamera"];
const disabledTools = ["Innenansicht", "Kamera", "Höhenbemaß"];

const overrides = [
  "20 Vorentwurfsplanung",
  "30 Entwurfsplanung",
  "40 Genehmigungsplanung",
  "50 Ausführungsplanung",
  "60 Bauteile schwarz",
  "60 Bauteile weiß mit Trennlinien",
  "60 Brandschutz",
  "60 Schnitte/Ansichten ohne Schraffuren",
  "70 Durchbrüche Gewerk Elektro",
  "70 Durchbrüche Gewerk Gas",
  "70 Durchbrüche Gewerk Heizung",
  "70 Durchbrüche Gewerk Lüftung",
  "70 Durchbrüche Gewerk Sanitär",
  "70 Raum Bodenbeläge",
  "80 ARCHICAD Modell transparent, IFC rot",
  "80 Hotlink-Module grau",
  "90 Prüfung Bauteile ohne Klassifikation",
  "90 Prüfung Bemaßung und Etiketten",
  "90 Prüfung Ebenen zu Klassifierung",
  "90 Prüfung Lage innen - außen",
  "90 Prüfung Raumgrößen",
  "90 Prüfung Tragende Funktion",
  "90 Prüfung Türbreite",
  "90 Prüfung Türhöhe",
];

type TreeNode = { label: string; level: number; icon: string; state?: "open" | "closed"; selected?: boolean };

const tree: TreeNode[] = [
  { label: "Ohne Titel", level: 0, icon: "navBlue", state: "open" },
  { label: "Beispielausschnitte", level: 1, icon: "folder", state: "open" },
  { label: "Arbeitseinstellung", level: 2, icon: "folder", state: "open" },
  { label: "Geschosse", level: 3, icon: "storyLink", state: "open" },
  { label: "1. OG", level: 4, icon: "story" },
  { label: "0. EG", level: 4, icon: "story", selected: true },
  { label: "-1. UG", level: 4, icon: "story" },
  { label: "Ansichten", level: 3, icon: "section" },
  { label: "Schnitte", level: 3, icon: "section", state: "closed" },
  { label: "Innenansichten", level: 3, icon: "interior" },
  { label: "Details", level: 3, icon: "detail" },
  { label: "Arbeitsblätter", level: 3, icon: "worksheet" },
  { label: "3D-Dokumente", level: 3, icon: "doc3d" },
  { label: "3D", level: 3, icon: "box3d", state: "closed" },
  { label: "Vorentwurfsplanung", level: 2, icon: "folder", state: "closed" },
  { label: "Entwurfsplanung", level: 2, icon: "folder", state: "closed" },
  { label: "", level: 2, icon: "folder" },
];

const indent = ["pl-[3px]", "pl-[16px]", "pl-[29px]", "pl-[43px]", "pl-[56px]"];

const statusItems = [
  { icon: "orient", text: "keine Daten", muted: true },
  { icon: "scale", text: "1:50" },
  { icon: "layers", text: "00 Arbeitsei..." },
  { icon: "combine", text: "Komplettes..." },
  { icon: "pen", text: "04 S/W 1:20..." },
  { icon: "frame", text: "00 Arbeitsei..." },
  { icon: "override", text: "Raum Trans...", pressed: true },
  { icon: "reno", text: "00 Reiner N..." },
  { icon: "houseTrain", text: "Nur Hauptm..." },
];

const levels = [
  { y: 111, top: "+3,00", bottom: "1 OG" },
  { y: 423, top: "±0,00", bottom: "0 EG" },
  { y: 735, top: "-3,00", bottom: "-1 UG" },
];

function Toolbar() {
  return (
    <div className="flex h-[31px] shrink-0 bg-[#e5e5e5]">
      <div className="flex items-start border-b border-[#dedede] bg-[#ebebeb] pr-1">
        <span className="mt-1 mr-1 ml-px h-4 w-0.5 bg-[#d2d2d2]" />
        {toolbar.map((item, i) => {
          if (item.kind === "sep") {
            return <span key={i} className="mx-[5px] mt-0.5 h-[22px] w-px bg-[#d6d6d6]" />;
          }
          if (item.kind === "chev" || item.kind === "chevPressed") {
            return (
              <button
                key={i}
                aria-label={item.label}
                className={`mx-px flex h-[26px] w-3 items-center justify-center rounded-sm ${item.kind === "chevPressed" ? "bg-[#bfbdc2]" : ""}`}
              >
                <Chevron down />
              </button>
            );
          }
          const shape = item.kind === "pressed" ? "mx-px w-[26px] rounded bg-[#bfbdc2]" : item.kind === "wide" ? "w-[29px]" : "w-7";
          return (
            <button key={i} aria-label={item.label} className={`flex h-[26px] items-center justify-center ${shape}`}>
              <Icon name={item.icon ?? ""} />
            </button>
          );
        })}
      </div>
    </div>
  );
}

function Panel({ title, children }: { title: string; children: ReactNode }) {
  return (
    <section className="flex w-[175px] shrink-0 flex-col border-r border-[#d3d3d3] px-1">
      <h2 className="h-4 pt-0.5 text-[10px] leading-3 font-medium whitespace-nowrap">{title}</h2>
      {children}
    </section>
  );
}

const card = "flex items-center rounded bg-white shadow-[0_1px_1px_rgba(0,0,0,0.18)]";
const field = "min-w-0 bg-white px-[3px] text-[11px] shadow-[0_1px_0_rgba(0,0,0,0.22)] outline-none";

function InfoBox() {
  return (
    <div className="flex h-[59px] shrink-0 overflow-hidden bg-[#ebebeb] pl-[3px]">
      <Panel title="Haupt:">
        <div className="flex gap-0.5">
          <div className="flex flex-col">
            <span className="h-4 text-[10px] leading-4 font-medium">Alle aktiven: 1</span>
            <div className="flex gap-0.5">
              <button aria-label="Auswahlart" className={`${card} h-[18px] w-[38px] justify-between px-1`}>
                <Icon name="marqueeArrow" />
                <Chevron />
              </button>
              <button aria-label="Markierung" className={`${card} h-[18px] w-[38px] justify-between px-1`}>
                <Icon name="marquee" />
                <Chevron />
              </button>
              <button aria-label="Magnet" className="flex h-[18px] w-[38px] items-center justify-center rounded bg-[#bfbdc2]">
                <Icon name="magnet" className="size-4" />
              </button>
            </div>
          </div>
          <button aria-label="Raumwerkzeug" className={`${card} mt-1.5 h-[27px] w-9 justify-center`}>
            <Icon name="room" className="size-[22px]" />
          </button>
          <button aria-label="Favoriten" className={`${card} mt-1.5 h-[27px] w-2`}>
            <Chevron />
          </button>
        </div>
      </Panel>

      <Panel title="Ebene:">
        <button className={`${card} mt-1.5 h-[27px] gap-1 px-2 text-[11px]`}>
          <Icon name="eye" className="size-4" />
          <span className="flex-1 text-left">80 Raum</span>
          <Chevron />
        </button>
      </Panel>

      <Panel title="Konstruktionsmethode:">
        <div className="mt-1.5 flex items-center gap-0.5">
          <button aria-label="Manuell" className="flex h-[27px] w-10 items-center justify-center">
            <Icon name="methodA" className="size-[26px]" />
          </button>
          <button aria-label="Rechteck" className="flex h-[27px] w-10 items-center justify-center rounded bg-[#bfbdc2]">
            <Icon name="methodB" className="size-[26px]" />
            <Chevron />
          </button>
          <button aria-label="Innenkante" className="flex h-[27px] w-10 items-center justify-center">
            <Icon name="methodC" className="size-[22px]" />
          </button>
          <button aria-label="Bezugslinie" className="flex h-[27px] w-10 items-center justify-center">
            <Icon name="methodD" className="size-[22px]" />
          </button>
        </div>
      </Panel>

      <Panel title="Anmerkung:">
        <div className="mt-1.5 flex gap-0.5">
          <button className="flex h-[27px] w-10 items-center justify-center rounded bg-[#f5f5f5] text-[13px] text-[#a0a3a5] shadow-[0_1px_1px_rgba(0,0,0,0.08)]">
            <Icon name="call" className="size-3" />
            A1
          </button>
          <button aria-label="Favorit" className="flex h-[27px] w-10 items-center justify-center gap-1 rounded bg-[#f5f5f5] shadow-[0_1px_1px_rgba(0,0,0,0.08)]">
            <Icon name="starGrey" />
            <Chevron muted />
          </button>
        </div>
      </Panel>

      <Panel title="Raumname und Nummer:">
        <div className="mt-0.5 flex flex-col gap-1">
          <div className="flex h-4 items-center gap-[3px] text-[11px]">
            <label htmlFor="room-name" className="w-10 text-right">Name:</label>
            <input id="room-name" defaultValue="Wohnen" className={`${field} h-[15px] flex-1`} />
            <button aria-label="Raumname wählen" className="ml-0.5 flex h-3.5 w-3.5 items-center justify-center rounded bg-white">
              <Chevron />
            </button>
          </div>
          <div className="flex h-4 items-center gap-[3px] text-[11px]">
            <label htmlFor="room-number" className="w-10 text-right">Nr.:</label>
            <input id="room-number" defaultValue="R-001" className={`${field} h-[15px] flex-1`} />
          </div>
        </div>
      </Panel>

      <Panel title="Raumkategorie:">
        <button className={`${card} mt-1.5 h-[27px] px-[3px] text-[11px] whitespace-nowrap`}>
          <span className="min-w-0 flex-1 text-left">01 NUF Wohnen und Auf...</span>
          <span className="h-6 w-3.5 shrink-0 border border-[#222] bg-[#e6f3fe]" />
          <Chevron />
        </button>
      </Panel>

      <Panel title="Verknüpfte Geschosse:">
        <div className="mt-0.5 flex flex-col gap-1 pl-2 text-[11px] whitespace-nowrap">
          <div className="flex h-4 items-center gap-3">
            <Icon name="hands" className="size-5" />
            <span className="min-w-0 flex-1">1. OG (Ursprungsg...</span>
            <button aria-label="Oberes Geschoss" className="flex h-3.5 w-3.5 shrink-0 items-center justify-center rounded bg-white">
              <Chevron />
            </button>
          </div>
          <div className="flex h-4 items-center gap-3">
            <Icon name="houseGround" className="size-5" />
            <span className="flex-1">0. EG</span>
            <button aria-label="Unteres Geschoss" className="flex h-3.5 w-3.5 shrink-0 items-center justify-center rounded bg-white">
              <Chevron />
            </button>
          </div>
        </div>
      </Panel>

      <Panel title="ID und Eigenschaften:">
        <div className="mt-1.5 flex items-center gap-1">
          <input aria-label="ID" defaultValue="Raum-001" className={`${field} h-5 flex-1`} />
          <button aria-label="Eigenschaften" className={`${card} h-[27px] w-9 justify-center gap-1.5`}>
            <Icon name="doc" className="size-4" />
            <Chevron />
          </button>
        </div>
      </Panel>

      <Panel title="Klassifizierung:">
        <div className="mt-1.5 flex items-center gap-1 pl-0.5 text-[11px]">
          <Icon name="classify" className="size-4" />
          <span className="flex-1">Raum</span>
          <button aria-label="Klassifizierung wählen" className={`${card} h-[27px] w-9 justify-center gap-1`}>
            <Icon name="tree" />
            <Chevron />
          </button>
        </div>
      </Panel>

      <Panel title="Unte">
        <div className="mt-1.5 flex h-[27px] items-center">
          <Icon name="zoneCut" className="size-7" />
        </div>
      </Panel>
    </div>
  );
}

function Tool({ name, active = false }: { name: string; active?: boolean }) {
  const disabled = disabledTools.includes(name);
  return (
    <button
      disabled={disabled}
      className={`flex shrink-0 items-center gap-1.5 pl-[5px] text-[11px] font-medium whitespace-nowrap odd:h-[27px] even:h-[26px] ${
        active ? "rounded-md bg-[#bfbec2]" : ""
      } ${disabled ? "text-[#93918e]" : "text-[#1c1c1c]"}`}
    >
      <svg
        viewBox="0 0 30 24"
        fill={active ? "none" : "#fcfcfb"}
        stroke={disabled ? "#a2a09c" : INK}
        className="h-6 w-[30px] shrink-0"
        aria-hidden="true"
      >
        {toolIcons[name]}
      </svg>
      {name}
    </button>
  );
}

function ToolHeader({ title }: { title: string }) {
  return (
    <button className="flex h-5 shrink-0 items-center gap-2 rounded-sm border-y border-[#f3f0ec] bg-[#d4d4d4] pl-[3px] text-[11px] font-medium text-[#2b2b2b]">
      <span className="border-x-4 border-t-[7px] border-x-transparent border-t-[#8d9192]" />
      {title}
    </button>
  );
}

function Palette() {
  return (
    <nav aria-label="Werkzeugkasten" className="relative flex w-[134px] shrink-0 flex-col overflow-hidden border-r border-[#dcdcdc] bg-[#f4f1ec]">
      <div className="flex h-[5px] shrink-0 justify-center bg-[#ebebeb] pt-[3px]">
        <span className="h-px w-[51px] bg-[#a5a5a5]" />
      </div>
      <div className="flex shrink-0 flex-col pb-px">
        <Tool name="Pfeil" active />
        <Tool name="Markierungsrah..." />
      </div>
      <ToolHeader title="Planung" />
      <div className="flex shrink-0 flex-col">
        {planungTools.map((name) => (
          <Tool key={name} name={name} />
        ))}
      </div>
      <ToolHeader title="Sichten" />
      <div className="flex shrink-0 flex-col pb-px">
        {sichtenTools.map((name) => (
          <Tool key={name} name={name} />
        ))}
      </div>
      <ToolHeader title="Dokumentation" />
      <div className="flex min-h-0 flex-1 justify-between overflow-hidden">
        <div className="flex flex-col">
          <Tool name="Bemaßung" />
          <Tool name="Höhenbemaß" />
        </div>
        <div className="h-[29px] w-[9px] bg-[#fafafa] pt-[3px] pl-0.5">
          <div className="h-3.5 w-1.5 rounded-full bg-[#7b7b7b]" />
        </div>
      </div>
    </nav>
  );
}

function TabBar() {
  return (
    <div className="flex h-5 shrink-0 bg-[#e2e2e2] text-[11px] text-[#444]">
      <button aria-label="Tab-Übersicht" className="flex w-8 items-center justify-center border-r-2 border-[#cfcfcf] bg-[#e6e6e6]">
        <Icon name="tabs" className="size-[18px]" />
      </button>
      <button className="flex w-[283px] items-center justify-center gap-1 bg-[#e6e6e6]">
        <Icon name="story" className="size-4" />
        0. EG [0. EG]
      </button>
      <button className="flex w-[284px] items-center justify-center gap-1 bg-white">
        <Icon name="sectionTab" className="size-4" />
        [S-01 Schnitt]
      </button>
      <button aria-label="Ansichten" className="ml-auto flex w-[47px] items-center justify-end gap-1 bg-[#f7f7f7] pr-1">
        <Icon name="views" className="size-[22px]" />
        <Chevron down />
      </button>
    </div>
  );
}

function Drawing() {
  const hTicks = Array.from({ length: 19 }, (_, i) => 236 + i * 18.2);
  const vTicks = Array.from({ length: 15 }, (_, i) => 155 + i * 18.2);
  return (
    <div className="relative min-h-0 flex-1 overflow-hidden bg-[#efefef]">
      <svg className="absolute inset-0 h-full w-full" aria-label="Schnitt">
        <rect x="192" y="0" width="415" height="100%" fill="#fff" />
        <path d="M192 2v14M607 2v14" stroke="#222" strokeWidth="1.500" />
        {levels.map((l) => (
          <g key={l.top} className="font-['Liberation_Sans',Arial,sans-serif] text-[25px]">
            <path d={`M0 ${l.y}.500H192M607 ${l.y}.500H988`} stroke="#1a1a1a" />
            <text x="129" y={l.y - 7} textAnchor="end">{l.top}</text>
            <text x="129" y={l.y + 24} textAnchor="end">{l.bottom}</text>
            <text x="670" y={l.y - 7}>{l.top}</text>
            <text x="670" y={l.y + 24}>{l.bottom}</text>
          </g>
        ))}
        <rect x="223.500" y="142.500" width="352" height="280" fill="#d8fbd6" stroke="#9be388" />
        <g stroke="#5fc24c" strokeWidth="1.500">
          {hTicks.map((x) => (
            <path key={x} d={`M${x} 141.500v2M${x} 421.500v2`} />
          ))}
          {vTicks.map((y) => (
            <path key={y} d={`M222.500 ${y}h2M574.500 ${y}h2`} />
          ))}
        </g>
        <circle cx="223.500" cy="142.500" r="3" />
        <circle cx="575.500" cy="142.500" r="3" />
        <circle cx="575.500" cy="422.500" r="3" />
        <path d="M220.500 419.500l6 6M226.500 419.500l-6 6" stroke="#000" strokeWidth="1.800" />
        <g fill="#e8e8e8">
          <rect x="632" y="0" width="30" height="15" rx="2" />
          <rect x="632" y="769" width="30" height="16" rx="2" />
          <rect x="1" y="377" width="15" height="30" rx="2" />
          <rect x="1279" y="377" width="15" height="30" rx="2" />
        </g>
        <path d="M635 8.500h26M635 776.500h26M9.500 380v26M1285.500 380v26" stroke="#f2b27a" strokeDasharray="5 2" />
      </svg>
    </div>
  );
}

function StatusBar() {
  return (
    <div className="flex h-[17px] shrink-0 bg-[#ebebeb] text-[11px] leading-[18px] whitespace-nowrap">
      <div className="flex w-[68px] items-center justify-around border-r border-[#d6d6d6]">
        <button aria-label="Vorheriger Zoom"><Icon name="zoomPrev" className="size-4" /></button>
        <button aria-label="Nächster Zoom"><Icon name="zoomNext" className="size-4" /></button>
        <button aria-label="Vergrößern"><Icon name="zoomIn" className="size-4" /></button>
      </div>
      <div className="flex w-28 items-center border-r border-[#d6d6d6] px-1 pt-px">
        <button aria-label="Einpassen"><Icon name="fit" className="size-4" /></button>
        <span className="flex-1 text-center">109%</span>
        <Chevron />
      </div>
      {statusItems.map((s, i) => (
        <button key={i} className="flex min-w-0 flex-1 items-center border-r border-[#d6d6d6] pl-1.5">
          <Icon name={s.icon} className="size-4" />
          <span
            className={`ml-[5px] flex h-full min-w-0 flex-1 items-center rounded pt-px pr-[3px] ${s.pressed ? "bg-[#a9a8ad]" : ""} ${
              s.muted ? "text-[#b0b0b0]" : ""
            }`}
          >
            <span className="flex-1 text-center">{s.text}</span>
            <Chevron muted={s.muted} />
          </span>
        </button>
      ))}
      <button className="flex w-[108px] items-center gap-2 pt-px pr-0.5 pl-1.5">
        <Icon name="dims" className="size-4" />
        <span className="flex-1 text-left">DIN 1356 -...</span>
        <Chevron />
      </button>
    </div>
  );
}

function Slider({ label }: { label: string }) {
  return (
    <div className="relative flex h-5 flex-1 items-center">
      <div className="absolute inset-x-1 flex h-2 justify-between bg-[linear-gradient(#dcdcdc,#dcdcdc)] bg-[length:100%_3px] bg-center bg-no-repeat">
        {Array.from({ length: 9 }, (_, i) => (
          <span key={i} className="w-px bg-[#d6d6d6]" />
        ))}
      </div>
      <input
        type="range"
        aria-label={label}
        defaultValue={100}
        className="relative w-full appearance-none bg-transparent [&::-webkit-slider-thumb]:h-4 [&::-webkit-slider-thumb]:w-2 [&::-webkit-slider-thumb]:appearance-none [&::-webkit-slider-thumb]:rounded-full [&::-webkit-slider-thumb]:border [&::-webkit-slider-thumb]:border-[#dcdcdc] [&::-webkit-slider-thumb]:bg-[#f6f6f6]"
      />
    </div>
  );
}

function Navigator() {
  const softCard = "flex h-[26px] shrink-0 items-center justify-center rounded bg-[#f5f5f5] shadow-[0_1px_1px_rgba(0,0,0,0.1)]";
  return (
    <aside className="flex w-[172px] shrink-0 flex-col overflow-hidden bg-[#ebebeb] text-[11px] whitespace-nowrap">
      <div className="flex h-1.5 shrink-0 justify-center pt-[3px] pl-1">
        <span className="h-px w-[66px] bg-[#a5a5a5]" />
      </div>
      <div className="flex h-8 shrink-0 items-center pl-2">
        <button aria-label="Projektmappe"><Icon name="houseOnly" /></button>
        <span className="mx-2 h-5 w-px bg-[#d6d6d6]" />
        <button aria-label="Ausschnittmappe" className="flex h-[26px] w-[26px] items-center justify-center rounded bg-[#bfbdc2]">
          <Icon name="navView" />
        </button>
        <button aria-label="Layoutbuch" className="ml-2"><Icon name="layout" /></button>
        <button aria-label="Publisher" className="ml-[11px]"><Icon name="books" /></button>
        <button aria-label="Optionen" className={`${card} ml-4 h-5 w-9 shrink-0 gap-1 pl-1.5`}>
          <Icon name="list" className="size-3" />
          <Chevron />
        </button>
      </div>
      <div className="mt-[3px] ml-[3px] flex h-5 shrink-0 items-center gap-1.5 border-b border-[#d0d0d0] bg-white pl-1.5">
        <Icon name="search" className="size-3.5" />
        <input
          aria-label="Ausschnitt-Mappe durchsuchen"
          placeholder="Ausschnitt-Mappe durch"
          className="w-[140px] shrink-0 outline-none placeholder:text-[#b9b9b9]"
        />
      </div>

      <div className="mt-[3px] flex min-h-0 flex-1">
        <ul className="min-w-0 flex-1 overflow-hidden border-r border-[#dedede] bg-white">
          {tree.map((node) => (
            <li key={node.label} className="h-[23px] nth-[3n]:h-[22px]">
              <button className={`flex h-full w-full items-center font-medium ${indent[node.level]} ${node.selected ? "bg-[#dadada]" : ""}`}>
                <span className="flex w-[15px] shrink-0">
                  {node.state && (
                    <svg viewBox="0 0 10 10" fill="none" stroke="#6a6a6a" strokeWidth="1.300" className={`size-2.5 ${node.state === "open" ? "rotate-90" : ""}`}>
                      <path d="M3 1.500L7 5 3 8.500" />
                    </svg>
                  )}
                </span>
                <Icon name={node.icon} />
                <span className="ml-[3px]">{node.label}</span>
              </button>
            </li>
          ))}
        </ul>
        <div className="w-[11px] bg-[#fafafa] pt-[3px] pl-[3px]">
          <div className="h-[235px] w-2 rounded-full bg-[#c1c1c1]" />
        </div>
      </div>
      <div className="flex h-[13px] shrink-0 items-center border-t border-[#dedede] bg-[#fafafa] pl-[3px]">
        <div className="h-2 w-[118px] rounded-full bg-[#c1c1c1]" />
      </div>

      <div className="flex h-[34px] shrink-0 items-center gap-[10px] pl-2">
        <button aria-label="Ausschnitt sichern"><Icon name="addView" /></button>
        <button aria-label="Ausschnitt klonen"><Icon name="addLink" /></button>
        <button aria-label="Neuer Ordner"><Icon name="addFolder" /></button>
        <button aria-label="Einstellungen öffnen"><Icon name="listBlue" /></button>
        <button aria-label="Löschen"><Icon name="cross" /></button>
      </div>

      <button className="ml-[3px] flex h-5 shrink-0 items-center gap-2 bg-[#d3d3d3] pl-1 font-medium">
        <span className="border-x-4 border-t-[7px] border-x-transparent border-t-[#8d9192]" />
        Beschreibungen
      </button>
      <div className="flex h-[22px] shrink-0 items-center pl-[3px]">
        <Icon name="storyPlain" className="size-3.5" />
        <input aria-label="Geschossnummer" defaultValue="0." className={`${field} ml-1 h-4 w-[30px]`} />
        <input aria-label="Geschossname" defaultValue="EG" className={`${field} ml-1 h-4 flex-1`} />
      </div>
      <div className="shrink-0 pb-[3px]">
        {[
          { icon: "layers", text: "00 Arbeitseinstellung" },
          { icon: "scale", text: "1:50" },
          { icon: "frame", text: "00 Arbeitseinstellung" },
        ].map((row) => (
          <div key={row.icon} className="flex h-[19px] items-center gap-1 pl-[3px]">
            <Icon name={row.icon} className="size-[15px]" />
            {row.text}
          </div>
        ))}
      </div>
      <button className={`${card} ml-[3px] h-5 shrink-0 justify-center`}>Einstellungen...</button>

      <div className="mt-[3px] flex h-2.5 shrink-0 justify-center border-t border-[#dcdcdc] pt-1 pl-1">
        <span className="h-px w-[66px] bg-[#a5a5a5]" />
      </div>
      <div className="flex shrink-0 gap-0.5 pl-[3px]">
        <button aria-label="Transparentpause" className={`${card} h-[26px] w-[26px] justify-center`}>
          <Icon name="trace" />
        </button>
        <button aria-label="Referenz wählen" className="flex h-[26px] flex-1 items-center justify-end rounded bg-[#f5f5f5] pr-0.5 shadow-[0_1px_1px_rgba(0,0,0,0.1)]">
          <Chevron muted />
        </button>
      </div>
      <div className="flex h-[37px] shrink-0 items-center gap-2.5 pb-[3px] pl-2">
        <button aria-label="Tauschen" className="mr-7"><Icon name="swap" /></button>
        <button aria-label="Verschieben"><Icon name="traceMove" /></button>
        <button aria-label="Drehen"><Icon name="traceRotate" /></button>
        <button aria-label="Zurücksetzen"><Icon name="traceBack" /></button>
        <button aria-label="Aktualisieren"><Icon name="refresh" /></button>
      </div>
      <div className="shrink-0 border-t border-[#d4d4d4] pb-[7px] pl-[3px] text-[#7a7a7a]">
        <div className="flex h-[25px] items-center">Transparentpause:</div>
        <div className="flex gap-0.5">
          <button aria-label="Farbe Transparentpause" className={`${softCard} w-[26px] gap-px`}>
            <span className="size-3 bg-[#f29a8c]" />
            <Chevron muted />
          </button>
          <Slider label="Deckkraft Transparentpause" />
          <button aria-label="Mehr" className={`${softCard} w-3`}><Chevron muted /></button>
        </div>
        <div className="flex h-6 items-center">Aktiv:</div>
        <div className="flex gap-0.5">
          <button aria-label="Farbe Aktiv" className={`${softCard} w-[26px] gap-px`}>
            <svg viewBox="0 0 14 14" className="size-3.5" stroke="#8d8d8d">
              <path d="M7 7V1A6 6 0 0 1 12.200 10z" fill="#f29a8c" />
              <path d="M7 7l5.200 3A6 6 0 0 1 1.800 10z" fill="#9dbcf5" />
              <path d="M7 7L1.800 10A6 6 0 0 1 7 1z" fill="#93c9a0" />
            </svg>
            <Chevron muted />
          </button>
          <Slider label="Deckkraft Aktiv" />
          <span className="w-3" />
        </div>
      </div>
      <div className="flex h-[35px] shrink-0 items-center gap-[11px] border-y border-[#d4d4d4] pl-9">
        <button aria-label="Referenz ziehen"><Icon name="hand" /></button>
        <button aria-label="Überlagern"><Icon name="overlap" /></button>
        <button aria-label="Teilen"><Icon name="splitView" /></button>
        <button aria-label="Schraffur ausblenden"><Icon name="hatchHide" /></button>
      </div>
    </aside>
  );
}

function OverrideMenu() {
  return (
    <div
      role="menu"
      className="absolute right-[262px] bottom-10 flex h-[512px] w-[245px] flex-col rounded-lg border border-[#c9c6c4] bg-[#ebe6e3] px-1 py-[3px] text-[11px] text-[#262626] shadow-[0_4px_14px_rgba(0,0,0,0.25)]"
    >
      <button role="menuitem" className="h-5 shrink-0 pl-[18px] text-left">Keine Überschreibungen</button>
      <hr className="mx-2 my-[5px] border-[#d4cfcc]" />
      <div className="min-h-0 flex-1 overflow-hidden">
        {overrides.map((name) => (
          <button key={name} role="menuitem" className="block h-[19px] w-full pl-[18px] text-left whitespace-nowrap">
            {name}
          </button>
        ))}
      </div>
      <button role="menuitem" className="mt-1 flex h-[19px] shrink-0 items-center rounded bg-[#669bf6] pl-1 text-left text-white">
        <svg viewBox="0 0 14 14" fill="none" stroke="#fff" strokeWidth="1.700" className="size-3.5" aria-hidden="true">
          <path d="M1.500 7.500L4.500 11.500 9.500 2.500" />
        </svg>
        Raum Transparent
      </button>
    </div>
  );
}

export default function App() {
  return (
    <div className="h-screen bg-[#2f4f7d]">
      <div className="relative flex h-full flex-col overflow-hidden rounded-b-md bg-[#ebebeb] font-['Inter','Liberation_Sans',sans-serif] text-[#262626]">
        <Toolbar />
        <InfoBox />
        <div className="flex min-h-0 flex-1">
          <Palette />
          <main className="flex min-w-0 flex-1 flex-col border-r border-[#e2e2e2]">
            <TabBar />
            <Drawing />
            <StatusBar />
          </main>
          <Navigator />
        </div>
        <footer className="flex h-[23px] shrink-0 items-center justify-end gap-2.5 bg-linear-to-b from-[#ebebeb] to-[#dcdcdc] pr-2">
          <button aria-label="Fenster"><Icon name="windows" className="size-4" /></button>
          <span className="h-3.5 w-px bg-[#b5b5b5]" />
          <a href="#id" className="font-['Lato',sans-serif] text-[13px] leading-none text-[#33373a]">
            <span className="font-medium">GRAPHISOFT</span> <span className="font-light">ID</span>
          </a>
        </footer>

        <OverrideMenu />

        {/* callout around the active override and arrow to the room */}
        <svg className="pointer-events-none absolute inset-0 h-full w-full" fill="none" stroke="#ee57f3" aria-hidden="true">
          <rect x="1093" y="868" width="245" height="29" strokeWidth="4" />
          <path d="M736 513L1086 878" strokeWidth="4" />
          <path d="M725 503l18 4-14 13z" fill="#ee57f3" />
        </svg>
      </div>
    </div>
  );
}
